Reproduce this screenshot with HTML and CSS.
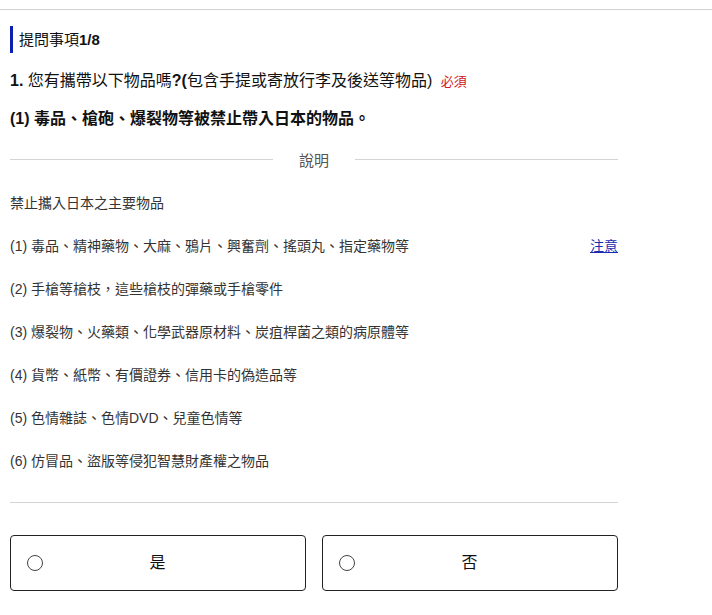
FILE: index.html
```html
<!DOCTYPE html>
<html lang="zh-Hant">
<head>
  <meta charset="UTF-8">
  <meta name="viewport" content="width=device-width, initial-scale=1.0">
  <title>提問事項</title>
  <link rel="stylesheet" href="styles.css">
</head>
<body>
  <div class="topbar"></div>

  <main class="questionnaire">
    <h2 class="step-title">提問事項<b>1/8</b></h2>

    <p class="question"><b>1.</b> 您有攜帶以下物品嗎<b>?(</b>包含手提或寄放行李及後送等物品) <span class="required">必須</span></p>
    <p class="sub-question">(1) 毒品、槍砲、爆裂物等被禁止帶入日本的物品。</p>

    <div class="divider-label">說明</div>

    <p class="intro">禁止攜入日本之主要物品</p>
    <ul class="items">
      <li><span>(1) 毒品、精神藥物、大麻、鴉片、興奮劑、搖頭丸、指定藥物等</span><a href="#" class="note">注意</a></li>
      <li>(2) 手槍等槍枝，這些槍枝的彈藥或手槍零件</li>
      <li>(3) 爆裂物、火藥類、化學武器原材料、炭疽桿菌之類的病原體等</li>
      <li>(4) 貨幣、紙幣、有價證券、信用卡的偽造品等</li>
      <li>(5) 色情雜誌、色情DVD、兒童色情等</li>
      <li>(6) 仿冒品、盜版等侵犯智慧財產權之物品</li>
    </ul>

    <hr class="rule">

    <div class="answers">
      <label class="answer"><span class="radio"></span><span class="answer-text">是</span></label>
      <label class="answer"><span class="radio"></span><span class="answer-text">否</span></label>
    </div>
  </main>
</body>
</html>
```

FILE: styles.css
```css
body {
  margin: 0;
  font-family: "Liberation Sans", "Noto Sans CJK TC", sans-serif;
  color: #222;
  background: #fff;
}

.topbar {
  height: 9px;
  border-bottom: 1px solid #d0d0d0;
}

.questionnaire {
  width: 608px;
  margin-left: 10px;
}

.step-title {
  margin: 16px 0 0;
  height: 27px;
  line-height: 27px;
  border-left: 3px solid #0b1fb0;
  padding-left: 6px;
  font-size: 15px;
  font-weight: normal;
  color: #111;
}

.step-title b {
  font-weight: bold;
}

.question {
  margin: 16px 0 0;
  line-height: 24px;
  font-size: 16px;
  color: #111;
}

.required {
  margin-left: 4px;
  font-size: 13px;
  color: #d0161c;
}

.sub-question {
  margin: 13px 0 0;
  line-height: 24px;
  font-size: 16px;
  font-weight: bold;
  color: #111;
}

.divider-label {
  display: flex;
  align-items: center;
  gap: 26px;
  margin-top: 18px;
  height: 20px;
  font-size: 15px;
  color: #555;
}

.divider-label::before,
.divider-label::after {
  content: "";
  flex: 1;
  border-top: 1px solid #d4d4d4;
}

.intro {
  margin: 24px 0 0;
  line-height: 20px;
  font-size: 14px;
  color: #333;
}

.items {
  list-style: none;
  margin: 0;
  padding: 0;
}

.items li {
  display: flex;
  justify-content: space-between;
  margin-top: 23px;
  line-height: 20px;
  font-size: 14px;
  color: #333;
}

.note {
  color: #1a2bb0;
  font-size: 14px;
}

.rule {
  margin: 31px 0 0;
  border: 0;
  border-top: 1px solid #d4d4d4;
}

.answers {
  display: grid;
  grid-template-columns: 1fr 1fr;
  gap: 16px;
  margin-top: 32px;
}

.answer {
  display: flex;
  align-items: center;
  height: 54px;
  padding: 0 16px;
  border: 1px solid #222;
  border-radius: 4px;
  cursor: pointer;
}

.radio {
  width: 14px;
  height: 14px;
  border: 1.5px solid #444;
  border-radius: 50%;
}

.answer-text {
  flex: 1;
  text-align: center;
  padding: 0 17px 4px 0;
  font-size: 16px;
  color: #111;
}
```
